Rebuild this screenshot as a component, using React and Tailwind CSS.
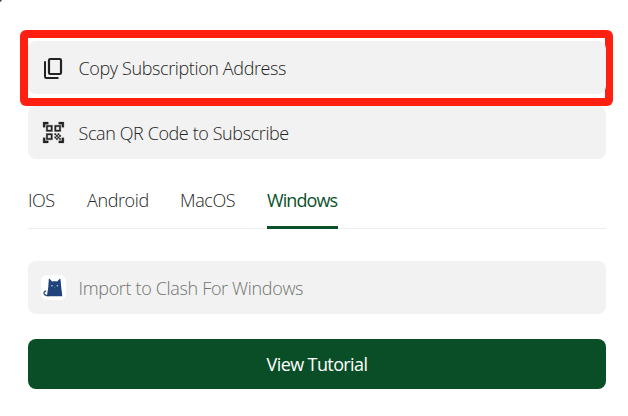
import { MdQrCodeScanner } from "react-icons/md";

function CopyIcon() {
  return (
    <svg width="26" height="26" viewBox="0 0 26 26" fill="none" stroke="#222422" strokeWidth="2.2">
      <rect x="8" y="4" width="12" height="15" rx="1.2" />
      <path d="M4 7.3v14.2Q4 23 5.3 23H16.5" strokeLinecap="square" strokeWidth="2" />
    </svg>
  );
}

function CatIcon() {
  return (
    <svg width="25" height="25" viewBox="0 0 25 25">
      <rect width="25" height="25" rx="6" fill="#fff" />
      <path
        d="M7.8 4.4c.1-.7.6-.8 1-.4l2.3 2.5c1.6-.3 3.4-.3 5 0L18.5 4c.4-.4.9-.3 1 .4l.8 8.3 1 8.6H6.6q-.7-.2-.6-1l1.2-7.6z"
        fill="#21437c"
      />
      <path d="M5.2 16.2c-1.8.1-2.6 1.4-2 2.8.7 1.5 2.3 1.7 4.6 1.7" fill="none" stroke="#21437c" strokeWidth="1.3" />
      <circle cx="10.9" cy="10.7" r=".8" fill="#c9d7ef" />
      <circle cx="16.4" cy="10.7" r=".8" fill="#c9d7ef" />
      <path d="M13.1 12.4h1.2l-.6.8z" fill="#8ca3cb" />
    </svg>
  );
}

function Row({ icon, children, className = "" }) {
  return (
    <div className={"flex h-[53px] items-center rounded-lg bg-[#f2f2f2] pl-[12.5px] text-[18px] font-light " + className}>
      <span className="flex w-[26px] shrink-0 justify-center">{icon}</span>
      <span className="ml-[12px] whitespace-nowrap pt-px">{children}</span>
    </div>
  );
}

export default function App() {
  return (
    <main className="relative h-[416px] w-[628px] overflow-hidden bg-white px-[28px] pt-[41px] font-['Open_Sans','Noto_Sans',sans-serif] text-[#222422]">
      <div className="absolute -left-1 -top-1 size-[6px] rounded-full bg-[#55443d]" />
      <div className="absolute left-[20px] top-[30px] h-[76px] w-[593px] rounded-[6px] bg-[#ff2012] p-[8px]">
        <div className="h-full bg-white" />
      </div>
      <div className="relative w-[578px]">
        <Row icon={<CopyIcon />}><span className="tracking-[-0.38px]">Copy Subscription Address</span></Row>
        <Row icon={<MdQrCodeScanner className="size-[25px] [&>path:not([fill=none])]:stroke-[#222422] [&>path:not([fill=none])]:[stroke-width:0.25]" />} className="mt-[12px]"><span className="tracking-[-0.4px]">Scan QR Code to Subscribe</span></Row>
        <nav className="flex h-[70px] items-end gap-[31px] border-b border-[#ededed] text-[18px] font-light leading-[24px]">
          <span className="w-[28px] whitespace-nowrap pb-[16px] tracking-[-0.5px]">IOS</span>
          <span className="w-[62px] whitespace-nowrap pb-[16px] tracking-[-0.4px]">Android</span>
          <span className="w-[56px] whitespace-nowrap pb-[16px] tracking-[-0.4px]">MacOS</span>
          <span className="-mb-px w-[71px] whitespace-nowrap border-b-[3px] border-[#0a5029] pb-[14px] font-medium tracking-[-0.9px] text-[#0a5029]">Windows</span>
        </nav>
        <Row icon={<CatIcon />} className="mt-[32px]"><span className="tracking-[-0.34px] text-[#707270]">Import to Clash For Windows</span></Row>
        <button className="mt-[25px] flex h-[50px] w-full items-center justify-center rounded-lg bg-[#0a4e28] pt-px text-[18px] font-normal tracking-[-0.6px] text-white">
          View Tutorial
        </button>
      </div>
    </main>
  );
}
